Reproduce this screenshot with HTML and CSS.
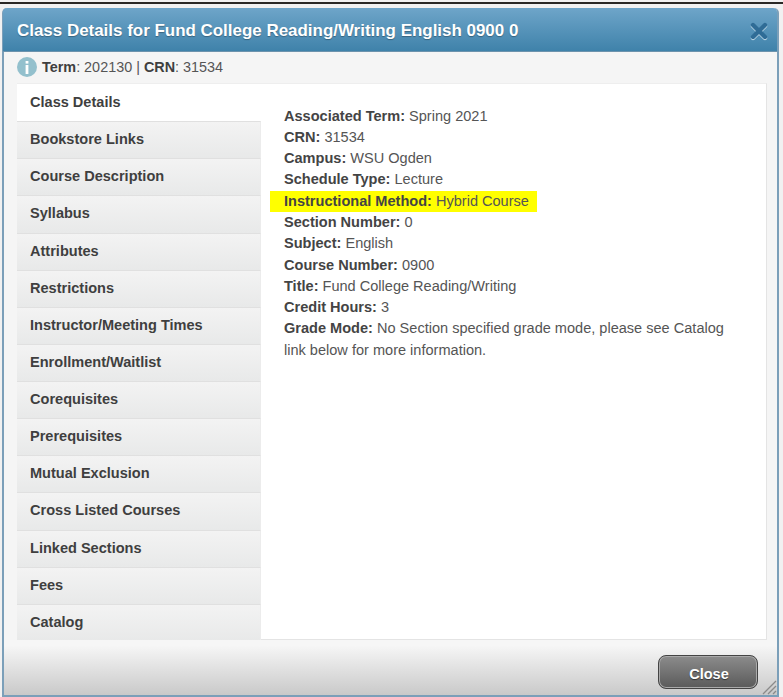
FILE: index.html
```html
<!DOCTYPE html>
<html lang="en">
<head>
    <meta charset="UTF-8">
    <meta name="viewport" content="width=device-width, initial-scale=1.0">
    <title>Class Details</title>
    <link rel="stylesheet" href="styles.css">
</head>
<body>
    <div class="topbar"></div>
    <div class="dialog">
        <div class="titlebar">
            <span class="title">Class Details for Fund College Reading/Writing English 0900 0</span>
            <svg class="close-x" width="20" height="20" viewBox="0 0 20 20">
                <path d="M4 5 L16 17 M16 5 L4 17" fill="none" stroke="#c4dbe8" stroke-width="4.4" stroke-linecap="round"/>
                <path d="M4 4 L16 16 M16 4 L4 16" fill="none" stroke="#2f6c96" stroke-width="4.4" stroke-linecap="round"/>
            </svg>
        </div>

        <div class="content">
            <div class="term-line">
                <svg class="info-icon" width="20" height="20" viewBox="0 0 20 20">
                    <circle cx="10" cy="10" r="10" fill="#93c0cd"/>
                    <rect x="8.6" y="4" width="2.8" height="2.6" fill="#fff"/>
                    <rect x="8.6" y="8" width="2.8" height="9" fill="#fff"/>
                </svg>
                <span><b>Term</b>: 202130 | <b>CRN</b>: 31534</span>
            </div>

            <div class="panel">
                <ul class="tabs">
                    <li class="tab active">Class Details</li>
                    <li class="tab">Bookstore Links</li>
                    <li class="tab">Course Description</li>
                    <li class="tab">Syllabus</li>
                    <li class="tab">Attributes</li>
                    <li class="tab">Restrictions</li>
                    <li class="tab">Instructor/Meeting Times</li>
                    <li class="tab">Enrollment/Waitlist</li>
                    <li class="tab">Corequisites</li>
                    <li class="tab">Prerequisites</li>
                    <li class="tab">Mutual Exclusion</li>
                    <li class="tab">Cross Listed Courses</li>
                    <li class="tab">Linked Sections</li>
                    <li class="tab">Fees</li>
                    <li class="tab">Catalog</li>
                </ul>

                <div class="details">
                    <div class="row"><b>Associated Term:</b> Spring 2021</div>
                    <div class="row"><b>CRN:</b> 31534</div>
                    <div class="row"><b>Campus:</b> WSU Ogden</div>
                    <div class="row"><b>Schedule Type:</b> Lecture</div>
                    <div class="row highlight"><b>Instructional Method:</b> Hybrid Course</div>
                    <div class="row"><b>Section Number:</b> 0</div>
                    <div class="row"><b>Subject:</b> English</div>
                    <div class="row"><b>Course Number:</b> 0900</div>
                    <div class="row"><b>Title:</b> Fund College Reading/Writing</div>
                    <div class="row"><b>Credit Hours:</b> 3</div>
                    <div class="row"><b>Grade Mode:</b> No Section specified grade mode, please see Catalog</div>
                    <div class="row">link below for more information.</div>
                </div>
            </div>
        </div>

        <div class="footer">
            <button class="close-btn">Close</button>
            <svg class="grip" width="15" height="15" viewBox="0 0 15 15">
                <path d="M1 14 L14 1 M6 14 L14 6 M11 14 L14 11" fill="none" stroke="#8a8a8a" stroke-width="1.3"/>
            </svg>
        </div>
    </div>
</body>
</html>
```

FILE: styles.css
```css
* {
    margin: 0;
    padding: 0;
    box-sizing: border-box;
}

html, body {
    height: 697px;
    overflow: hidden;
}

body {
    font-family: "Liberation Sans", Arial, sans-serif;
    font-size: 14.55px;
    color: #555;
    background: #f1f1f1;
    padding-top: 2px;
}

.topbar {
    height: 2px;
    background: #2a2825;
    margin-bottom: 4px;
}

.dialog {
    position: relative;
    width: 777px;
    height: 689px;
    margin-left: 2px;
    display: flex;
    flex-direction: column;
    background: #f5f5f5;
    border: 2px solid #7b9fb9;
    border-top: none;
    border-radius: 5px 5px 0 0;
}

.titlebar {
    height: 44px;
    flex-shrink: 0;
    display: flex;
    align-items: center;
    justify-content: space-between;
    padding: 2px 8px 0 14px;
    background: linear-gradient(#6ea5c9, #3f82aa);
    border-bottom: 1px solid #6d93ad;
    border-radius: 4px 4px 0 0;
    margin-left: -1px;
}

.title {
    color: #fff;
    font-size: 16.95px;
    font-weight: bold;
    text-shadow: 0 1px 1px rgba(0,0,0,0.3);
}

.close-x {
    display: block;
}

.content {
    padding: 0 10px 0 13px;
}

.term-line {
    height: 31px;
    display: flex;
    align-items: center;
    gap: 5px;
    padding-bottom: 2px;
    font-size: 14.4px;
}

.info-icon {
    flex-shrink: 0;
}

.panel {
    display: flex;
    height: 557px;
    background: #fff;
    border: 1px solid #e4e4e4;
    border-left: none;
    border-top-color: #eee;
}

.tabs {
    list-style: none;
    width: 244px;
    flex-shrink: 0;
}

.tab {
    height: 37.14px;
    display: flex;
    align-items: center;
    padding: 0 0 2px 13px;
    font-weight: bold;
    color: #3f3f3f;
    background: linear-gradient(#f3f3f3, #e8e9e9);
    border-top: 1px solid #e0e0e0;
    border-right: 1px solid #ececec;
}

.tab.active {
    background: #fff;
    border-top: none;
    border-right: none;
}

.details {
    flex: 1;
    padding: 21.5px 22px 0 23px;
    line-height: 21.3px;
}

.details b {
    color: #444;
}

.term-line b {
    color: #3f3f3f;
}

.highlight {
    background: #ffff00;
    margin-left: -14px;
    padding-left: 14px;
    width: 267px;
    white-space: nowrap;
}

.footer {
    flex: 1;
    position: relative;
    display: flex;
    justify-content: flex-end;
    align-items: flex-start;
    padding: 15px 19px 0 0;
    background: linear-gradient(#f6f6f6 10%, #c9c9c9);
}

.close-btn {
    width: 100px;
    height: 34px;
    padding: 3px 0 0 2px;
    font-family: "Liberation Sans", Arial, sans-serif;
    font-size: 14.55px;
    font-weight: bold;
    color: #fff;
    text-shadow: 0 1px 1px rgba(0,0,0,0.5);
    background: linear-gradient(#8c8c8c, #5a5a5a);
    border: 1px solid #444;
    border-radius: 8px;
    box-shadow: inset 0 0 0 1px #aaa;
    cursor: pointer;
}

.grip {
    position: absolute;
    right: 0;
    bottom: 0;
}
```
